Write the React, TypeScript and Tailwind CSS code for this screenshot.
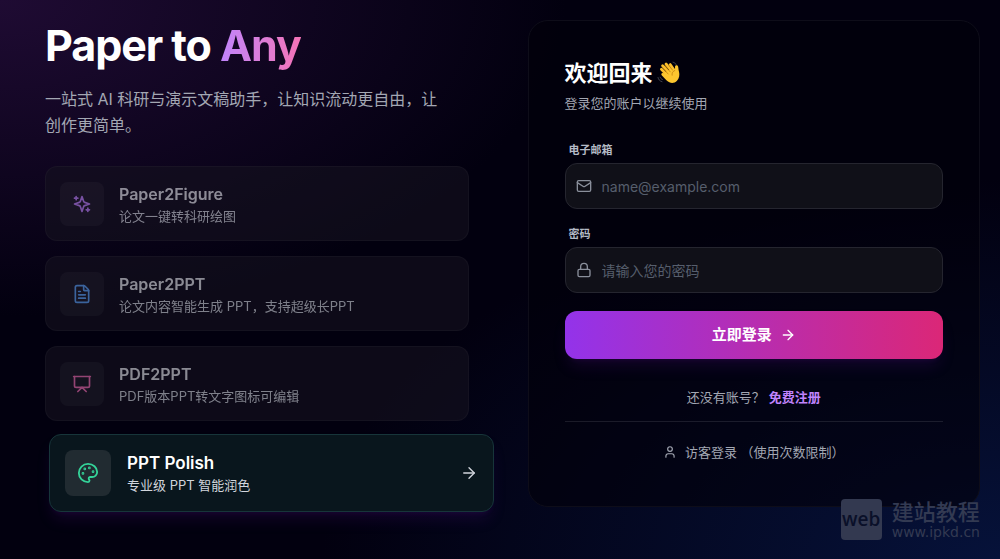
import type { ReactNode } from 'react';
import { ArrowRight, FileText, Lock, Mail, Presentation, User } from 'lucide-react';

interface Feature {
  title: string;
  description: string;
  icon: ReactNode;
  active?: boolean;
}

const SparklesIcon = ({ className }: { className?: string }) => (
  <svg
    viewBox="0 0 24 24"
    fill="none"
    stroke="currentColor"
    strokeWidth={2}
    strokeLinecap="round"
    strokeLinejoin="round"
    className={className}
    aria-hidden="true"
  >
    <path d="m12 3-1.912 5.813a2 2 0 0 1-1.275 1.275L3 12l5.813 1.912a2 2 0 0 1 1.275 1.275L12 21l1.912-5.813a2 2 0 0 1 1.275-1.275L21 12l-5.813-1.912a2 2 0 0 1-1.275-1.275L12 3Z" />
    <path d="M5 3v4" />
    <path d="M19 17v4" />
    <path d="M3 5h4" />
    <path d="M17 19h4" />
  </svg>
);

const PaletteIcon = ({ className }: { className?: string }) => (
  <svg
    viewBox="0 0 24 24"
    fill="none"
    stroke="currentColor"
    strokeWidth={2}
    strokeLinecap="round"
    strokeLinejoin="round"
    className={className}
    aria-hidden="true"
  >
    <circle cx="13.5" cy="6.5" r=".5" fill="currentColor" />
    <circle cx="17.5" cy="10.5" r=".5" fill="currentColor" />
    <circle cx="8.5" cy="7.5" r=".5" fill="currentColor" />
    <circle cx="6.5" cy="12.5" r=".5" fill="currentColor" />
    <path d="M12 2C6.5 2 2 6.5 2 12s4.5 10 10 10c.926 0 1.648-.746 1.648-1.688 0-.437-.18-.835-.437-1.125-.29-.289-.438-.652-.438-1.125a1.64 1.64 0 0 1 1.668-1.668h1.996c3.051 0 5.555-2.503 5.555-5.554C21.965 6.012 17.461 2 12 2z" />
  </svg>
);

const WavingHand = ({ className }: { className?: string }) => (
  <svg viewBox="0 0 24 24" className={className} role="img" aria-label="挥手">
    <g stroke="#fbbf2b" strokeLinecap="round" strokeWidth={2.8}>
      <path d="M4.4 8.2 11 15" />
      <path d="M5.6 4.8 13 12.4" />
      <path d="M9 3 15 10" />
      <path d="M13.2 3.6 17 9" />
    </g>
    <path
      d="M6.2 12.2 15.4 7l2.4 2.4c.5-1.6.1-3 .3-4.1.3-1.5 2.5-1.6 2.9 0 .5 1.9.4 3.3 1 5.4.8 2.9.3 6.6-2 9-2.4 2.6-6.3 2.9-9 .8-2-1.5-4.6-4.2-6.3-6.2-1-1.3.2-2.8 1.5-2.1Z"
      fill="#fcc62f"
    />
    <g fill="none" stroke="#b8750c" strokeLinecap="round" strokeWidth={0.7}>
      <path d="m5.8 7.4 5.4 5.6" />
      <path d="m8 4.9 5.3 6" />
      <path d="m11.8 4.3 3.7 4.8" />
      <path d="M17.8 9.5c-2 .8-3.1 2.5-2.7 4.7" />
    </g>
    <g fill="none" stroke="#5b6068" strokeLinecap="round" strokeWidth={0.7}>
      <path d="M1 16.5c.5 2.2 1.8 3.6 4 4.2" />
      <path d="M3.2 16.2c.4 1.2 1 1.9 2.2 2.3" />
      <path d="M16 1.2c1.5.3 2.5 1.1 3.1 2.4" />
    </g>
  </svg>
);

const FEATURES: Feature[] = [
  {
    title: 'Paper2Figure',
    description: '论文一键转科研绘图',
    icon: <SparklesIcon className="size-5 text-[#c084fc]" />,
  },
  {
    title: 'Paper2PPT',
    description: '论文内容智能生成 PPT，支持超级长PPT',
    icon: <FileText className="size-5 text-[#60a5fa]" />,
  },
  {
    title: 'PDF2PPT',
    description: 'PDF版本PPT转文字图标可编辑',
    icon: <Presentation className="size-5 text-[#f472b6]" />,
  },
  {
    title: 'PPT Polish',
    description: '专业级 PPT 智能润色',
    icon: <PaletteIcon className="size-[22px] text-[#34d399]" />,
    active: true,
  },
];

function FeatureCard({ feature }: { feature: Feature }) {
  if (feature.active) {
    return (
      <li className="-mt-[2px] ml-1 mr-1 flex items-center gap-4 rounded-xl border border-[#17353a] bg-[#09161d] p-[15px] shadow-lg shadow-purple-900/20">
        <span className="flex size-[46px] shrink-0 items-center justify-center rounded-lg bg-[#212b31]">
          {feature.icon}
        </span>
        <div className="min-w-0 flex-1 pt-[2px]">
          <h3 className="text-[17px] font-semibold leading-[22px] text-white">{feature.title}</h3>
          <p className="text-[13px] leading-[22px] text-gray-300">{feature.description}</p>
        </div>
        <ArrowRight className="size-[18px] text-gray-300" strokeWidth={1.8} />
      </li>
    );
  }

  return (
    <li className="mr-[29px] flex items-center gap-[15px] rounded-xl border border-white/5 bg-[#15121f] px-[14px] py-[13px] opacity-60">
      <span className="flex size-11 shrink-0 items-center justify-center rounded-lg bg-white/5">
        {feature.icon}
      </span>
      <div className="min-w-0 pt-[3px]">
        <h3 className="text-[16px] font-semibold leading-[22px] text-gray-200">{feature.title}</h3>
        <p className="text-[13px] leading-[22px] text-gray-300">{feature.description}</p>
      </div>
    </li>
  );
}

interface FieldProps {
  id: string;
  type: string;
  label: string;
  placeholder: string;
  icon: ReactNode;
}

function Field({ id, type, label, placeholder, icon }: FieldProps) {
  return (
    <div>
      <label htmlFor={id} className="mb-1 ml-1 block text-[11px] font-bold leading-[18px] text-[#b4bac6]">
        {label}
      </label>
      <div className="flex h-[46px] items-center gap-[10px] rounded-xl border border-[#25252f] bg-[#101018] px-[10px] text-[#8a8f9b] focus-within:border-purple-500">
        {icon}
        <input
          id={id}
          type={type}
          placeholder={placeholder}
          className="w-full min-w-0 bg-transparent text-[14px] text-white outline-none placeholder:text-[#565e6c]"
        />
      </div>
    </div>
  );
}

function Watermark() {
  return (
    <div className="absolute bottom-[19px] right-5 flex items-center gap-[10px] text-[#333a52]" aria-hidden="true">
      <span className="flex size-[41px] items-center justify-center rounded-sm bg-[#333950] font-['Open_Sans',sans-serif] text-[19px] font-semibold text-[#0a1029]">
        web
      </span>
      <span className="flex flex-col">
        <span className="text-[22px] font-medium leading-6">建站教程</span>
        <span className="font-['DejaVu_Sans',sans-serif] text-[14px] leading-4">www.ipkd.cn</span>
      </span>
    </div>
  );
}

export default function App() {
  return (
    <main className="relative min-h-screen bg-[#02000f] bg-[radial-gradient(ellipse_at_0%_0%,#1f0b33_0%,transparent_40%),radial-gradient(ellipse_at_100%_100%,#06123a_0%,transparent_48%)] font-[Inter,'Noto_Sans_CJK_SC',sans-serif] text-white">
      <div className="grid grid-cols-2 gap-[30px] pl-[45px] pr-5 pt-5">
        <section>
          <h1 className="text-[43px] font-bold leading-[50px] tracking-tight">
            Paper to{' '}
            <span className="bg-gradient-to-r from-[#c084fc] to-[#f472b6] bg-clip-text text-transparent">Any</span>
          </h1>
          <p className="mt-4 max-w-[404px] text-[16px] leading-[26px] text-[#a3a7b3]">
            一站式 AI 科研与演示文稿助手，让知识流动更自由，让创作更简单。
          </p>
          <ul className="mt-7 flex flex-col gap-[15px]">
            {FEATURES.map((feature) => (
              <FeatureCard key={feature.title} feature={feature} />
            ))}
          </ul>
        </section>

        <section className="self-start rounded-[20px] border border-[#0e0d19] bg-[#01000a]/60 px-9 pb-11 pt-9">
          <h2 className="flex items-center gap-1 text-[22px] font-bold leading-8">
            欢迎回来
            <WavingHand className="size-6" />
          </h2>
          <p className="mt-1 text-[13px] leading-5 text-[#a3a7b3]">登录您的账户以继续使用</p>

          <form className="mt-7 flex flex-col gap-4" onSubmit={(e) => e.preventDefault()}>
            <Field
              id="email"
              type="email"
              label="电子邮箱"
              placeholder="name@example.com"
              icon={<Mail className="size-4 shrink-0" />}
            />
            <Field
              id="password"
              type="password"
              label="密码"
              placeholder="请输入您的密码"
              icon={<Lock className="size-4 shrink-0" />}
            />
            <button
              type="submit"
              className="mt-[2px] flex h-12 items-center justify-center gap-2 rounded-xl bg-[linear-gradient(to_right,#9333ea,#db2777)] text-[15px] font-bold shadow-lg shadow-purple-900/20"
            >
              立即登录
              <ArrowRight className="size-4" />
            </button>
          </form>

          <p className="mt-7 text-center text-[13px] leading-5 text-[#a3a7b3]">
            还没有账号？
            <a href="#register" className="ml-1 font-bold text-[#c084fc]">
              免费注册
            </a>
          </p>

          <div className="mt-[14px] flex justify-center border-t border-white/10 pt-5">
            <button type="button" className="flex items-center gap-2 text-[13px] leading-5 text-[#a3a7b3]">
              <User className="size-[14px]" />
              访客登录 （使用次数限制）
            </button>
          </div>
        </section>
      </div>
      <Watermark />
    </main>
  );
}
